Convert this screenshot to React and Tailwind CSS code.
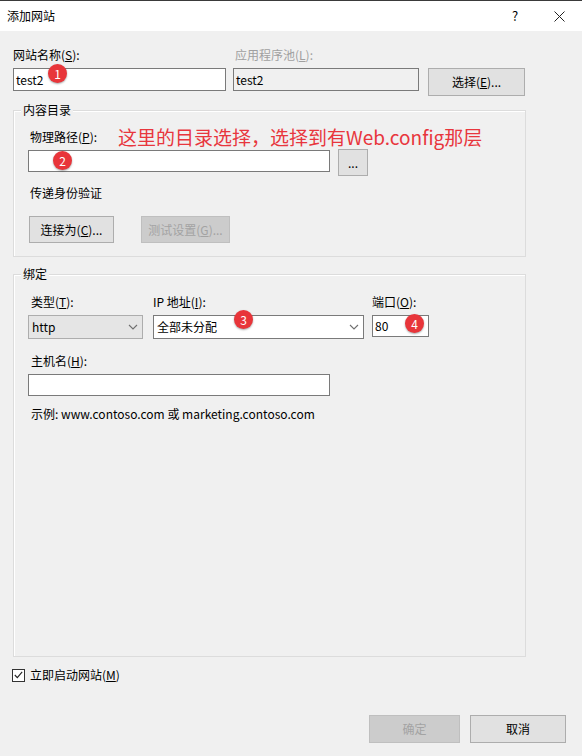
import React from "react";

const FONT = { fontFamily: '"Noto Sans CJK SC", "Noto Sans", sans-serif' };

function Badge({ n, className }) {
  return (
    <span
      className={
        "absolute w-[19px] h-[19px] rounded-full bg-[#e8353a] text-white text-[12px] leading-[19px] text-center shadow-[0_1px_2px_rgba(0,0,0,0.35)] " +
        className
      }
    >
      {n}
    </span>
  );
}

function Label({ children, className = "" }) {
  return <div className={"h-[16px] leading-[16px] text-[12px] text-[#000] " + className}>{children}</div>;
}

function Chevron() {
  return (
    <svg width="10" height="6" viewBox="0 0 10 6" className="shrink-0">
      <path d="M1 1 L5 5 L9 1" fill="none" stroke="#707070" strokeWidth="1.1" />
    </svg>
  );
}

function WinButton({ children, disabled, className = "" }) {
  return (
    <div
      className={
        "flex items-center justify-center text-[12px] border " +
        (disabled
          ? "bg-[#cccccc] border-[#bfbfbf] text-[#a3a3a3] "
          : "bg-[#e1e1e1] border-[#adadad] text-black ") +
        className
      }
    >
      {children}
    </div>
  );
}

function Group({ title, className = "", children }) {
  return (
    <div className={"relative border border-[#dcdcdc] shadow-[inset_1px_1px_0_#ffffff] " + className}>
      <span className="absolute left-[7px] top-[-9px] px-[2px] bg-[#f0f0f0] text-[12px] leading-[16px]">{title}</span>
      {children}
    </div>
  );
}

export default function App() {
  return (
    <div className="w-[582px] h-[756px] bg-[#f0f0f0] flex flex-col text-black overflow-hidden" style={FONT}>
      {/* TITLE BAR */}
      <div className="h-[31px] bg-white border-t border-[#3a3a3a] flex items-center pl-[7px] shrink-0">
        <span className="text-[12px]">添加网站</span>
        <span className="ml-auto text-[13px] w-[14px] text-center mr-[32px]">?</span>
        <svg width="11" height="11" viewBox="0 0 11 11" className="mr-[17px]">
          <path d="M0.5 0.5 L10.5 10.5 M10.5 0.5 L0.5 10.5" stroke="#222" strokeWidth="1" />
        </svg>
      </div>

      <div className="pl-[13px] pt-[16px] flex flex-col">
        {/* NAME / POOL ROW */}
        <div className="flex items-start">
          <div className="w-[213px]">
            <Label>网站名称(<u>S</u>):</Label>
            <div className="relative mt-[5px] h-[23px] bg-white border border-[#7a7a7a] flex items-center pl-[2px] text-[12px]">
              test2
              <Badge n="1" className="left-[34px] top-[-5px]" />
            </div>
          </div>
          <div className="w-[186px] ml-[7px]">
            <Label className="!text-[#a0a0a0] pl-[2px]">应用程序池(<u>L</u>):</Label>
            <div className="mt-[5px] h-[23px] bg-[#f0f0f0] border border-[#7a7a7a] flex items-center pl-[2px] text-[12px]">
              test2
            </div>
          </div>
          <WinButton className="ml-[9px] mt-[21px] w-[97px] h-[28px]">
            选择(<u>E</u>)...
          </WinButton>
        </div>

        {/* CONTENT DIRECTORY */}
        <Group title="内容目录" className="mt-[14px] w-[513px] h-[147px]">
          <div className="pl-[14px] pt-[18px] flex flex-col">
            <div className="flex items-center h-[16px]">
              <Label className="pl-[2px]">物理路径(<u>P</u>):</Label>
              <span className="ml-[21px] text-[19px] leading-[20px] text-[#e8363d]">
                这里的目录选择，选择到有Web.config那层
              </span>
            </div>
            <div className="flex items-start mt-[5px]">
              <div className="relative w-[302px] h-[22px] bg-white border border-[#7a7a7a]">
                <Badge n="2" className="left-[24px] top-[0px]" />
              </div>
              <WinButton className="ml-[8px] mt-[-1px] w-[30px] h-[27px]">...</WinButton>
            </div>
            <Label className="mt-[9px] pl-[2px]">传递身份验证</Label>
            <div className="flex mt-[15px] pl-[1px]">
              <WinButton className="w-[85px] h-[27px]">
                连接为(<u>C</u>)...
              </WinButton>
              <WinButton disabled className="ml-[27px] w-[89px] h-[27px]">
                测试设置(<u>G</u>)...
              </WinButton>
            </div>
          </div>
        </Group>

        {/* BINDING */}
        <Group title="绑定" className="mt-[17px] w-[513px] h-[383px]">
          <div className="pl-[14px] pt-[19px] flex flex-col">
            <div className="flex items-start">
              <div className="w-[115px]">
                <Label className="pl-[3px]">类型(<u>T</u>):</Label>
                <div className="mt-[5px] h-[24px] bg-[#e5e5e5] border border-[#adadad] flex items-center pl-[3px] pr-[4px] text-[12px]">
                  <span>http</span>
                  <span className="ml-auto">
                    <Chevron />
                  </span>
                </div>
              </div>
              <div className="w-[211px] ml-[10px]">
                <Label>IP 地址(<u>I</u>):</Label>
                <div className="relative mt-[5px] h-[24px] bg-white border border-[#7a7a7a] flex items-center pl-[3px] pr-[4px] text-[12px]">
                  <span>全部未分配</span>
                  <span className="ml-auto">
                    <Chevron />
                  </span>
                  <Badge n="3" className="left-[80px] top-[-6px]" />
                </div>
              </div>
              <div className="w-[57px] ml-[8px]">
                <Label>端口(<u>O</u>):</Label>
                <div className="relative mt-[5px] h-[22px] bg-white border border-[#7a7a7a] flex items-center pl-[2px] text-[12px]">
                  80
                  <Badge n="4" className="left-[32px] top-[-2px]" />
                </div>
              </div>
            </div>
            <Label className="mt-[14px] pl-[3px]">主机名(<u>H</u>):</Label>
            <div className="mt-[5px] w-[302px] h-[22px] bg-white border border-[#7a7a7a]" />
            <Label className="mt-[10px] pl-[3px]">示例: www.contoso.com 或 marketing.contoso.com</Label>
          </div>
        </Group>

        {/* START CHECKBOX */}
        <div className="flex items-center mt-[10px] ml-[-1px]">
          <div className="w-[13px] h-[13px] bg-white border border-[#333] flex items-center justify-center">
            <svg width="9" height="8" viewBox="0 0 9 8">
              <path d="M0.8 4 L3.3 6.6 L8.2 0.8" fill="none" stroke="#222" strokeWidth="1.1" />
            </svg>
          </div>
          <span className="ml-[5px] text-[12px] leading-[16px]">
            立即启动网站(<u>M</u>)
          </span>
        </div>

        {/* DIALOG BUTTONS */}
        <div className="flex mt-[32px] pl-[356px]">
          <WinButton disabled className="w-[91px] h-[28px]">
            确定
          </WinButton>
          <WinButton className="ml-[10px] w-[96px] h-[28px]">取消</WinButton>
        </div>
      </div>
    </div>
  );
}
